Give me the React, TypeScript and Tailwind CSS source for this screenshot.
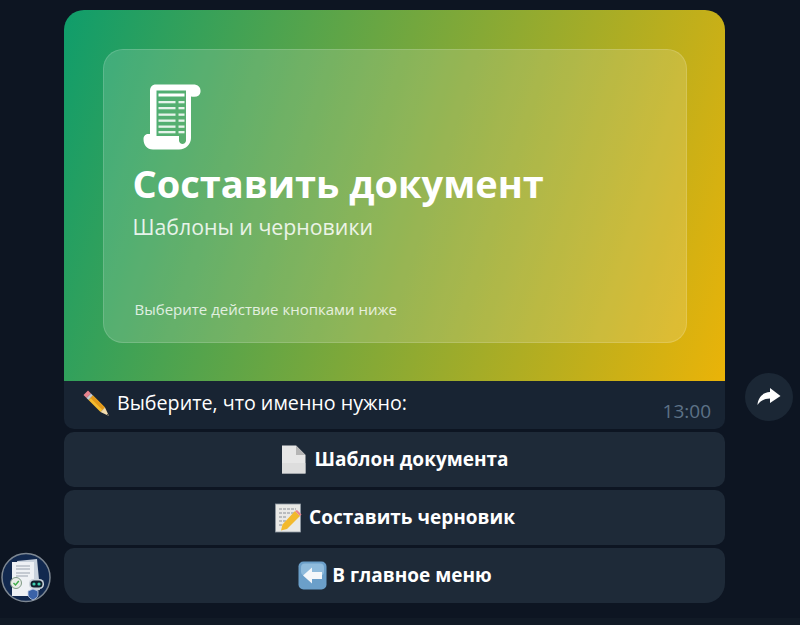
const font = "font-['Open_Sans',sans-serif]"

function ScrollIcon() {
  return (
    <svg width="58" height="66" viewBox="0 0 58 66" fill="#fff">
      <path
        fillRule="evenodd"
        d="M13 0.5H50C55 0.5 58 3 57.5 8C57 12 54 13.5 48 12.5V54C48 60 43 65.5 36 65.5H10C4 65.5 0.5 61 0.5 55C0.5 51.5 3 50 5 50H7V7C7 3 9 0.5 13 0.5ZM13.5 6.5V52H36V57C37 61 42 61 43 57V6.5Z"
      />
      <rect x="15.5" y="9.5" width="26" height="3" />
      {[17, 23, 29.5, 35.5, 41.5, 47].map((y) => (
        <g key={y}>
          <rect x="15.5" y={y} width="17" height="2.3" opacity="0.85" />
          <rect x="35.5" y={y} width="6" height="2.3" opacity="0.85" />
        </g>
      ))}
    </svg>
  )
}

function PencilEmoji() {
  return (
    <svg width="28" height="28" viewBox="0 0 28 28">
      <path d="M6 1.5L1.5 6L4.5 9L9 4.5Z" fill="#e8838f" />
      <path d="M4.5 9L9 4.5L11 6.5L6.5 11Z" fill="#c9ccd1" />
      <path d="M6.5 11L11 6.5L23 18.5L18.5 23Z" fill="#f5bc2f" />
      <path d="M8.5 9L11 6.5L23 18.5L20.5 21Z" fill="#e29a1c" />
      <path d="M18.5 23L23 18.5L27 27Z" fill="#f3dcae" />
      <path d="M24.8 25.7L25.8 24.7L27 27Z" fill="#3a3a3a" />
    </svg>
  )
}

function PageEmoji() {
  return (
    <svg width="25" height="29" viewBox="0 0 25 29">
      <path d="M1 0.5H15L24.5 10V28.5H1Z" fill="#e6e6e6" />
      <path d="M15 0.5L24.5 10H15Z" fill="#b5b5b5" />
      <path d="M1 18H24.5V28.5H1Z" fill="#d8d8d8" opacity="0.7" />
    </svg>
  )
}

function MemoEmoji() {
  return (
    <svg width="27" height="30" viewBox="0 0 27 30">
      <rect x="0.5" y="1" width="25" height="28" fill="#e9e9e6" stroke="#8f9aa3" strokeWidth="0.8" />
      {[6, 10, 14, 18, 22].map((y) => (
        <path key={y} d={`M4 ${y}H${y > 13 ? 11 : 21}`} stroke="#8a8f96" strokeWidth="1" strokeDasharray="3 1" />
      ))}
      <path d="M20 8L25 13L12 26L6 27.5L7.5 21.5Z" fill="#f2b92d" />
      <path d="M22 7L26.5 11.5L25 13L20 8Z" fill="#e8838f" />
    </svg>
  )
}

function BackEmoji() {
  return (
    <svg width="29" height="29" viewBox="0 0 29 29">
      <rect x="0.5" y="0.5" width="28" height="28" rx="5" fill="#6b9fc9" />
      <rect x="3" y="2.5" width="23" height="12" rx="4" fill="#8fbbdc" />
      <path d="M5 14.5L14 6.5V11H24V18H14V22.5Z" fill="#f4f7fa" />
    </svg>
  )
}

function Avatar() {
  return (
    <svg width="50" height="51" viewBox="0 0 50 51">
      <circle cx="25" cy="25.5" r="24" fill="#12294f" stroke="#7d8792" strokeWidth="1.5" />
      <path d="M16 9L36 7L39 38L20 42Z" fill="#c9d2dd" />
      <path d="M11 10H33V44H11Z" fill="#eef1f5" />
      <path d="M15 14H29M15 17H29M15 21H29M15 24H27" stroke="#9aa4b0" strokeWidth="1.2" />
      <circle cx="15" cy="31" r="5.5" fill="#e8ece8" stroke="#7f9a86" />
      <path d="M12.5 31L14.5 33L17.8 29" stroke="#3fae49" strokeWidth="1.4" fill="none" />
      <rect x="28" y="27" width="15" height="10" rx="4.5" fill="#cbd3db" />
      <rect x="29.5" y="28.5" width="12" height="7" rx="3.5" fill="#10202c" />
      <circle cx="33" cy="32" r="1.6" fill="#3fd0b0" />
      <circle cx="38" cy="32" r="1.6" fill="#3fd0b0" />
      <path d="M27 39L32 37L37 39V43C37 45 34 47 32 48C30 47 27 45 27 43Z" fill="#3a62a8" stroke="#c6d2e6" strokeWidth="0.8" />
    </svg>
  )
}

function KeyButton({ icon, label, gap, rounded }: { icon: React.ReactNode; label: string; gap: string; rounded: string }) {
  return (
    <button className={`flex h-[55px] items-center justify-center bg-[#1e2a38] pl-[1px] text-[19px] font-bold text-white ${gap} ${rounded}`}>
      {icon}
      <span>{label}</span>
    </button>
  )
}

export default function App() {
  return (
    <div className={`flex h-[625px] w-[800px] flex-col overflow-hidden bg-[#0d1522] ${font}`}>
      <div className="flex h-[618px] pt-[10px]">
        {/* avatar */}
        <div className="flex w-[64px] flex-col justify-end pb-[15px] pl-[1px]">
          <Avatar />
        </div>

        {/* message */}
        <div className="flex w-[661px] flex-col gap-[3px]">
          <div>
            <div className="h-[371px] rounded-t-[20px] bg-[linear-gradient(108deg,#0f9d6b,#eab308)] pb-[38px] pl-[39px] pr-[38px] pt-[39px]">
              <div className="flex h-[294px] flex-col rounded-[20px] border border-white/15 bg-white/15 pl-[28.5px] pt-[34px] pr-[30px]">
                <div className="pl-[10px]">
                  <ScrollIcon />
                </div>
                <div className="mt-[7px] text-[38px] font-bold leading-[52px] text-white">Составить документ</div>
                <div className="mt-[3px] text-[21.3px] leading-[30px] text-white/85">Шаблоны и черновики</div>
                <div className="mt-[57px] pl-[2px] text-[15px] leading-[20px] text-white/80">Выберите действие кнопками ниже</div>
              </div>
            </div>
            <div className="flex h-[48px] justify-between rounded-b-[10px] bg-[#182433] pl-[18px] pr-[14px]">
              <div className="flex items-start gap-[7px] pt-[8px]">
                <PencilEmoji />
                <span className="text-[19.7px] leading-[28px] text-white">Выберите, что именно нужно:</span>
              </div>
              <span className="self-end pb-[6px] text-[19px] leading-[24px] text-[#5d7287]">13:00</span>
            </div>
          </div>
          <KeyButton icon={<PageEmoji />} label="Шаблон документа" gap="gap-[8px]" rounded="rounded-[10px]" />
          <KeyButton icon={<MemoEmoji />} label="Составить черновик" gap="gap-[7px]" rounded="rounded-[10px]" />
          <KeyButton icon={<BackEmoji />} label="В главное меню" gap="gap-[5px]" rounded="rounded-t-[10px] rounded-b-[20px]" />
        </div>

        {/* forward */}
        <div className="ml-[20px] mt-[363px] flex h-[48px] w-[48px] items-center justify-center rounded-full bg-[#1b2735]">
          <svg width="24" height="18" viewBox="0 0 24 18" fill="#fff">
            <path d="M13 0L23.5 8L13 15V10.5C7.5 10.5 4 12.5 0.5 17C1 10 5 4.5 13 4Z" />
          </svg>
        </div>
      </div>
      <div className="flex-1 bg-[#111a26]" />
    </div>
  )
}
